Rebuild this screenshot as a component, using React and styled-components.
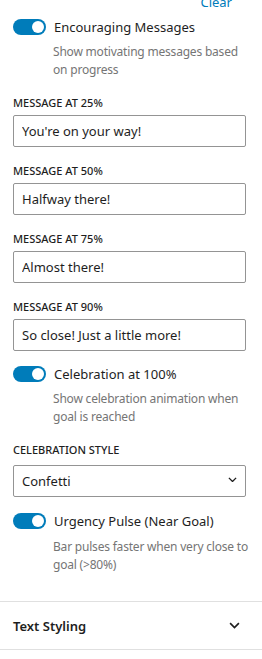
import React, { useState } from 'react'
import styled, { createGlobalStyle } from 'styled-components'

const GlobalStyle = createGlobalStyle`
	body {
		margin: 0;
		background: #fff;
		font-family: 'Noto Sans', 'Open Sans', sans-serif;
		color: #1e1e1e;
		overflow: hidden;
	}
`

const Panel = styled.div`
	width: 262px;
	box-sizing: border-box;
	padding: 0 16px 27px 13px;
`

const ClearRow = styled.div`
	margin-top: -10px;
	height: 16px;
	text-align: right;
	padding-right: 14px;
	a {
		font-size: 13px;
		line-height: 16px;
		color: #007cba;
		text-decoration: none;
	}
`

const ToggleRow = styled.label`
	display: flex;
	align-items: center;
	gap: 8px;
	margin-top: ${({ $mt }) => $mt}px;
	font-size: 13px;
	line-height: 16px;
	cursor: pointer;
`

const Track = styled.span`
	position: relative;
	width: 33px;
	height: 16px;
	border-radius: 8px;
	flex-shrink: 0;
	background: ${({ $on }) => ($on ? '#007cba' : '#fff')};
	border: ${({ $on }) => ($on ? 'none' : '1px solid #1e1e1e')};
	&::after {
		content: '';
		position: absolute;
		top: 2px;
		left: ${({ $on }) => ($on ? '19px' : '2px')};
		width: 12px;
		height: 12px;
		border-radius: 50%;
		background: ${({ $on }) => ($on ? '#fff' : '#1e1e1e')};
	}
`

const Help = styled.p`
	margin: ${({ $mt }) => $mt || 8}px -8px 0 40px;
	font-size: 12px;
	line-height: 18px;
	letter-spacing: -0.2px;
	color: #757575;
`

const Field = styled.div`
	margin-top: ${({ $mt }) => $mt}px;
`

const FieldLabel = styled.div`
	font-size: 11px;
	font-weight: 500;
	line-height: 16px;
	text-transform: uppercase;
	margin-bottom: ${({ $mb }) => $mb}px;
`

const TextInput = styled.input`
	display: block;
	width: 100%;
	height: 32px;
	box-sizing: border-box;
	padding: 0 8px;
	border: 1px solid #949494;
	border-radius: 2px;
	font-family: inherit;
	font-size: 13px;
	color: #1e1e1e;
	&:focus {
		outline: none;
		border-color: #007cba;
	}
`

const SelectBox = styled.div`
	position: relative;
	select {
		display: block;
		width: 100%;
		height: 32px;
		box-sizing: border-box;
		padding: 0 26px 0 8px;
		border: 1px solid #949494;
		border-radius: 2px;
		font-family: inherit;
		font-size: 13px;
		color: #1e1e1e;
		background: #fff;
		appearance: none;
	}
	svg {
		position: absolute;
		right: 9px;
		top: 12px;
		pointer-events: none;
	}
`

const Section = styled.div`
	border-top: 1px solid #e0e0e0;
	border-bottom: 1px solid #e0e0e0;
	height: 47px;
	box-sizing: content-box;
	display: flex;
	align-items: center;
	justify-content: space-between;
	padding: 0 22px 0 13px;
	font-size: 13px;
	font-weight: 600;
`

const Chevron = ({ size = 10 }) => (
	<svg width={size} height={size * 0.6} viewBox='0 0 10 6' fill='none'>
		<path d='M1 1l4 4 4-4' stroke='#1e1e1e' strokeWidth='1.5' />
	</svg>
)

const messages = [
	{ pct: 25, text: "You're on your way!" },
	{ pct: 50, text: 'Halfway there!' },
	{ pct: 75, text: 'Almost there!' },
	{ pct: 90, text: 'So close! Just a little more!' },
]

export default function App() {
	const [encourage, setEncourage] = useState(true)
	const [celebrate, setCelebrate] = useState(true)
	const [pulse, setPulse] = useState(true)
	const [values, setValues] = useState(messages.map((m) => m.text))
	const [style, setStyle] = useState('confetti')

	return (
		<>
			<GlobalStyle />
			<Panel>
				<ClearRow>
					<a href='#clear'>Clear</a>
				</ClearRow>
				<ToggleRow $mt={13} onClick={() => setEncourage((p) => !p)}>
					<Track $on={encourage} />
					Encouraging Messages
				</ToggleRow>
				<Help>Show motivating messages based on progress</Help>
				{messages.map((m, i) => (
					<Field key={m.pct} $mt={16}>
						<FieldLabel $mb={4}>Message at {m.pct}%</FieldLabel>
						<TextInput
							value={values[i]}
							onChange={(e) => setValues((prev) => prev.map((v, j) => (j === i ? e.target.value : v)))}
						/>
					</Field>
				))}
				<ToggleRow $mt={15} onClick={() => setCelebrate((p) => !p)}>
					<Track $on={celebrate} />
					Celebration at 100%
				</ToggleRow>
				<Help>Show celebration animation when goal is reached</Help>
				<Field $mt={16}>
					<FieldLabel $mb={7}>Celebration style</FieldLabel>
					<SelectBox>
						<select value={style} onChange={(e) => setStyle(e.target.value)}>
							<option value='confetti'>Confetti</option>
							<option value='fireworks'>Fireworks</option>
						</select>
						<Chevron size={9} />
					</SelectBox>
				</Field>
				<ToggleRow $mt={16} onClick={() => setPulse((p) => !p)}>
					<Track $on={pulse} />
					Urgency Pulse (Near Goal)
				</ToggleRow>
				<Help $mt={9}>Bar pulses faster when very close to goal (&gt;80%)</Help>
			</Panel>
			<Section>
				Text Styling
				<Chevron size={11} />
			</Section>
		</>
	)
}
